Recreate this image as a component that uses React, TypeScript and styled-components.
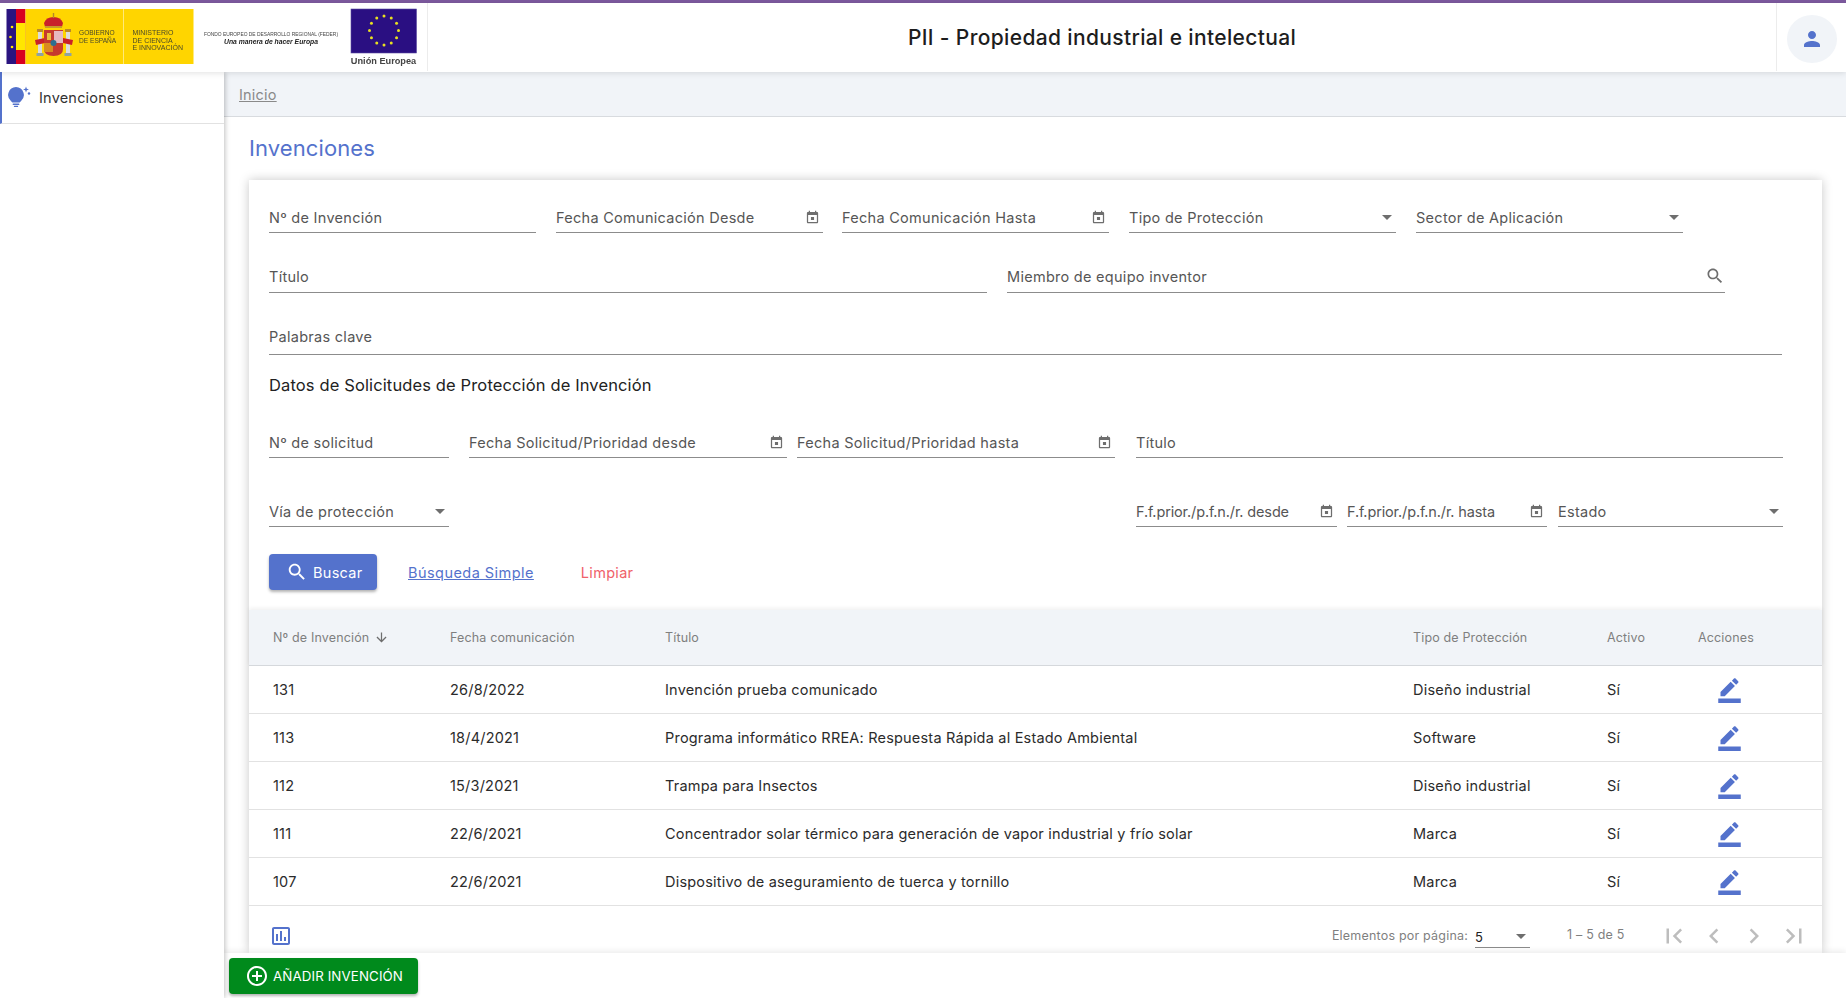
import React from 'react';
import styled, { createGlobalStyle } from 'styled-components';

const primary = '#5472cc';
const fontStack = 'Inter, "Noto Sans", "Liberation Sans", sans-serif';

const GlobalStyle = createGlobalStyle`
  html, body {
    margin: 0;
    height: 100%;
    overflow: hidden;
    background: #fff;
    font-family: ${fontStack};
    color: #2b2b2b;
  }
  * { box-sizing: border-box; }
`;

const Page = styled.div`
  display: flex;
  flex-direction: column;
  height: 998px;
  border-top: 3px solid #7d5a9f;
`;

const Header = styled.header`
  display: flex;
  flex: 0 0 69px;
  align-items: stretch;
  background: #fff;
  position: relative;
  z-index: 3;
  box-shadow: 0 1px 6px rgba(0, 0, 0, 0.12);
`;

const LogoBox = styled.div`
  flex: 0 0 428px;
  border-right: 1px solid #ececec;
  margin-bottom: 1px;
`;

const LogoArt = styled.svg`
  display: block;
  filter: blur(0.35px);
`;

const AppTitle = styled.h1`
  flex: 1;
  margin: 0;
  text-align: center;
  align-self: center;
  font-size: 21px;
  font-weight: 500;
  letter-spacing: 0.35px;
  color: #1d1d1d;
`;

const UserBox = styled.div`
  flex: 0 0 70px;
  display: flex;
  align-items: center;
  justify-content: center;
  border-left: 1px solid #ececec;
  margin-bottom: 1px;
  padding-left: 1px;
`;

const Avatar = styled.div`
  width: 50px;
  height: 48px;
  border-radius: 50%;
  background: #f1f4f8;
  display: flex;
  align-items: center;
  justify-content: center;
  margin-top: 3px;
`;

const Body = styled.div`
  display: flex;
  flex: 1;
  min-height: 0;
`;

const Sidebar = styled.nav`
  flex: 0 0 224px;
  background: #fff;
  position: relative;
  z-index: 2;
  box-shadow: 1px 0 5px rgba(0, 0, 0, 0.25);
`;

const NavItem = styled.div`
  display: flex;
  align-items: center;
  height: 52px;
  border-left: 2px solid ${primary};
  border-bottom: 1px solid #e2e2e2;
  padding-left: 5px;
  gap: 6px;
  font-size: 14.5px;
  letter-spacing: 0.2px;
  color: #333;
`;

const Main = styled.main`
  flex: 1;
  min-width: 0;
  display: flex;
  flex-direction: column;
`;

const Breadcrumb = styled.div`
  flex: 0 0 45px;
  background: #f1f4f8;
  border-bottom: 1px solid #d8dbdf;
  padding: 14px 0 0 15px;
  font-size: 14.5px;
  letter-spacing: 0.2px;
  color: #8a8a8a;
  text-decoration: underline;
`;

const Content = styled.div`
  flex: 1;
  min-height: 0;
  overflow: hidden;
  padding: 16px 24px 0 25px;
`;

const PageTitle = styled.h2`
  margin: 0;
  height: 47px;
  font-size: 22px;
  line-height: 30px;
  font-weight: 400;
  letter-spacing: 0.1px;
  color: ${primary};
`;

const Card = styled.section`
  background: #fff;
  box-shadow: 0 0 10px rgba(0, 0, 0, 0.22);
  height: 773px;
`;

const Form = styled.div`
  padding: 23px 38px 0 20px;
`;

const Row = styled.div<{ $mt?: number }>`
  display: flex;
  margin-top: ${(p) => p.$mt ?? 0}px;
`;

const Field = styled.div<{ $w: number; $ml?: number; $lift?: number; $tight?: boolean }>`
  flex: 0 0 ${(p) => p.$w}px;
  margin-left: ${(p) => p.$ml ?? 0}px;
  height: 30px;
  display: flex;
  align-items: center;
  justify-content: space-between;
  border-bottom: 1px solid #8c8c8c;
  font-size: 14.5px;
  letter-spacing: ${(p) => (p.$tight ? -0.14 : 0.28)}px;
  color: #565656;
  padding-bottom: ${(p) => p.$lift ?? 1}px;
`;

const Caret = styled.span`
  width: 0;
  height: 0;
  border-left: 5px solid transparent;
  border-right: 5px solid transparent;
  border-top: 5px solid #6e6e6e;
  margin-right: 4px;
`;

const FieldIcon = styled.span<{ $mr: number }>`
  display: flex;
  margin-right: ${(p) => p.$mr}px;
`;

const SectionTitle = styled.h3`
  margin: 18px 0 0;
  height: 24px;
  font-size: 16.5px;
  line-height: 24px;
  font-weight: 400;
  letter-spacing: 0.13px;
  color: #222;
`;

const Actions = styled.div`
  display: flex;
  align-items: center;
  margin-top: 27px;
  height: 36px;
`;

const SearchButton = styled.div`
  width: 108px;
  height: 36px;
  border-radius: 4px;
  background: ${primary};
  color: #fff;
  display: flex;
  align-items: center;
  padding-left: 17px;
  gap: 5px;
  font-size: 14.5px;
  letter-spacing: 0.3px;
  box-shadow: 0 2px 3px rgba(0, 0, 0, 0.3);
`;

const SimpleLink = styled.span`
  margin-left: 31px;
  font-size: 14.5px;
  letter-spacing: 0.45px;
  color: ${primary};
  text-decoration: underline;
`;

const ClearLink = styled.span`
  margin-left: 47px;
  font-size: 14.5px;
  letter-spacing: 0.3px;
  color: #f0626a;
`;

const TableWrap = styled.div`
  margin-top: 20px;
`;

const Grid = styled.div<{ $head?: boolean }>`
  display: grid;
  grid-template-columns: 201px 215px 748px 194px 91px 124px;
  align-items: center;
  height: ${(p) => (p.$head ? 56 : 48)}px;
  background: ${(p) => (p.$head ? '#f1f4f8' : '#fff')};
  border-bottom: 1px solid ${(p) => (p.$head ? '#d5d8dc' : '#e2e2e2')};
  font-size: ${(p) => (p.$head ? 12.5 : 14.5)}px;
  letter-spacing: ${(p) => (p.$head ? 0.15 : 0.2)}px;
  color: ${(p) => (p.$head ? '#7f7f7f' : '#2b2b2b')};
  box-shadow: ${(p) => (p.$head ? '0 -2px 4px rgba(0, 0, 0, 0.06)' : 'none')};
  & > :first-child {
    padding-left: 24px;
  }
`;

const SortHead = styled.span`
  display: flex;
  align-items: center;
  gap: 5px;
`;

const EditCell = styled.span`
  display: flex;
  padding-left: 18px;
`;

const TableFooter = styled.div`
  display: flex;
  align-items: center;
  height: 47px;
  padding: 12px 0 0 20px;
  font-size: 12.5px;
  letter-spacing: 0.2px;
  color: #7f7f7f;
`;

const FooterSpacer = styled.div`
  flex: 1;
`;

const PerPage = styled.div`
  display: flex;
  align-items: center;
  justify-content: space-between;
  width: 55px;
  height: 24px;
  margin-left: 7px;
  border-bottom: 1px solid #8c8c8c;
  color: #222;
  font-size: 13px;
  padding-top: 3px;
`;

const RangeLabel = styled.span`
  margin: -3px 0 0 37px;
  width: 92px;
`;

const PageIcons = styled.div`
  display: flex;
  gap: 10px;
  margin-right: 13px;
`;

const BottomBar = styled.div`
  flex: 0 0 45px;
  background: #fff;
  padding: 5px 0 0 5px;
  position: relative;
  box-shadow: 0 -2px 6px rgba(0, 0, 0, 0.08);
`;

const AddButton = styled.div`
  width: 189px;
  height: 36px;
  border-radius: 4px;
  background: #008a1c;
  color: #fff;
  display: flex;
  align-items: center;
  padding-left: 16px;
  gap: 4px;
  font-size: 13.3px;
  letter-spacing: 0.12px;
  box-shadow: 0 2px 3px rgba(0, 0, 0, 0.3);
`;

const Icon = ({ d, size, color }: { d: string; size: number; color: string }) => (
  <svg width={size} height={size} viewBox="0 0 24 24" fill={color}>
    <path d={d} />
  </svg>
);

const paths = {
  today: 'M19 3h-1V1h-2v2H8V1H6v2H5c-1.11 0-1.99.9-1.99 2L3 19c0 1.1.89 2 2 2h14c1.1 0 2-.9 2-2V5c0-1.1-.9-2-2-2zm0 16H5V8h14v11zM9.5 11h5v5h-5z',
  search: 'M15.5 14h-.79l-.28-.27C15.41 12.59 16 11.11 16 9.5 16 5.91 13.09 3 9.5 3S3 5.91 3 9.5 5.91 16 9.5 16c1.61 0 3.09-.59 4.23-1.57l.27.28v.79l5 4.99L20.49 19l-4.99-5zm-6 0C7.01 14 5 11.99 5 9.5S7.01 5 9.5 5 14 7.01 14 9.5 11.99 14 9.5 14z',
  person: 'M12 12c2.21 0 4-1.79 4-4s-1.79-4-4-4-4 1.79-4 4 1.79 4 4 4zm0 2c-2.67 0-8 1.34-8 4v2h16v-2c0-2.66-5.33-4-8-4z',
  edit: 'M22 24H2v-4h20v4zM13.06 5.19l3.75 3.75L7.75 18H4v-3.75l9.06-9.06zm4.82 2.68-3.75-3.75 1.83-1.83c.39-.39 1.02-.39 1.41 0l2.34 2.34c.39.39.39 1.02 0 1.41l-1.83 1.83z',
  poll: 'M19 3H5c-1.1 0-2 .9-2 2v14c0 1.1.9 2 2 2h14c1.1 0 2-.9 2-2V5c0-1.1-.9-2-2-2zm0 16H5V5h14v14zM7 10h2v7H7zm4-3h2v10h-2zm4 6h2v4h-2z',
  add: 'M13 7h-2v4H7v2h4v4h2v-4h4v-2h-4V7zm-1-5C6.48 2 2 6.48 2 12s4.48 10 10 10 10-4.48 10-10S17.52 2 12 2zm0 18c-4.41 0-8-3.59-8-8s3.59-8 8-8 8 3.59 8 8-3.59 8-8 8z',
  down: 'M20 12l-1.41-1.41L13 16.17V4h-2v12.17l-5.58-5.59L4 12l8 8 8-8z',
  first: 'M18.41 16.59L13.82 12l4.59-4.59L17 6l-6 6 6 6zM6 6h2v12H6z',
  prev: 'M15.41 7.41L14 6l-6 6 6 6 1.41-1.41L10.83 12z',
  next: 'M10 6L8.59 7.41 13.17 12l-4.58 4.59L10 18l6-6z',
  last: 'M5.59 7.41L10.18 12l-4.59 4.59L7 18l6-6-6-6zM16 6h2v12h-2z',
};

const euStars = Array.from({ length: 12 }, (_, i) => {
  const a = (i * Math.PI) / 6;
  return { x: 384 + 14.5 * Math.sin(a), y: 27.5 - 14.5 * Math.cos(a) };
});

const Logos = () => (
  <LogoArt width="427" height="68" viewBox="0 0 427 68">
    <rect x="6.5" y="6" width="9.5" height="55" fill="#2a1480" />
    <rect x="16" y="6" width="9.5" height="55" fill="#d8001f" />
    <rect x="16" y="20" width="9.5" height="27" fill="#ffe600" />
    <rect x="25.5" y="6" width="168" height="55" fill="#ffd500" />
    <rect x="123" y="6" width="1" height="55" fill="#ffe97a" />
    <circle cx="12" cy="24" r="1.3" fill="#ffe600" />
    <circle cx="10.5" cy="34" r="1.3" fill="#ffe600" />
    <circle cx="12" cy="44" r="1.3" fill="#ffe600" />
    {/* escudo */}
    <path d="M44 20 Q46 14 53.5 14 Q61 14 63 20 L62 24 H45 Z" fill="#c9202a" />
    <rect x="45" y="23" width="17" height="2" fill="#c79a2a" />
    <rect x="52.8" y="10" width="1.4" height="5" fill="#b5862a" />
    <rect x="37" y="26" width="6" height="3" fill="#b98a2a" />
    <rect x="65" y="26" width="6" height="3" fill="#b98a2a" />
    <rect x="38" y="29" width="4" height="21" fill="#dcdcdc" />
    <rect x="66" y="29" width="4" height="21" fill="#dcdcdc" />
    <rect x="36.5" y="50" width="7" height="3" fill="#8fa3a0" />
    <rect x="64.5" y="50" width="7" height="3" fill="#8fa3a0" />
    <path d="M35 37 L45 35 V40 L36 42 Z M73 37 L63 35 V40 L72 42 Z" fill="#c9202a" />
    <path d="M44 27 H63 V46 Q63 53 53.5 53 Q44 53 44 46 Z" fill="#c63a2e" />
    <rect x="54" y="28" width="9" height="12" fill="#e6b8c0" />
    <rect x="44" y="40" width="9" height="9" fill="#d98a20" />
    <rect x="47" y="30" width="4" height="7" fill="#e8c040" />
    <circle cx="53.5" cy="40" r="3" fill="#2e6f8f" />
    <g fill="#4a4a2a" fontFamily="Liberation Sans, sans-serif" fontSize="6.6">
      <text x="79" y="32">GOBIERNO</text>
      <text x="79" y="39.5">DE ESPAÑA</text>
    </g>
    <g fill="#4a4a2a" fontFamily="Liberation Sans, sans-serif" fontSize="7">
      <text x="132.5" y="32">MINISTERIO</text>
      <text x="132.5" y="39.5">DE CIENCIA</text>
      <text x="132.5" y="47">E INNOVACIÓN</text>
    </g>
    <text x="271" y="33" textAnchor="middle" fill="#444" fontFamily="Liberation Sans, sans-serif" fontSize="4.9">
      FONDO EUROPEO DE DESARROLLO REGIONAL (FEDER)
    </text>
    <text x="271" y="41" textAnchor="middle" fill="#222" fontFamily="Liberation Sans, sans-serif" fontSize="6.8" fontStyle="italic" fontWeight="700">
      Una manera de hacer Europa
    </text>
    <rect x="351" y="6" width="65.5" height="44" fill="#2a0f82" stroke="#5a4aa0" strokeWidth="0.6" />
    {euStars.map((s) => (
      <circle key={s.x + '-' + s.y} cx={s.x} cy={s.y} r="1.5" fill="#e8e020" />
    ))}
    <text x="383.5" y="61" textAnchor="middle" fill="#444" fontFamily="Liberation Sans, sans-serif" fontSize="9.2" fontWeight="700">
      Unión Europea
    </text>
  </LogoArt>
);

const Bulb = () => (
  <svg width="26" height="26" viewBox="0 0 26 26" fill={primary}>
    <g transform="translate(-0.5 -3.5)">
      <path d="M9.5 5.5a8 8 0 0 1 4.9 14.2c-.7.6-1.1 1-1.2 1.3H5.800c-.1-.3-.5-.7-1.200-1.300A8 8 0 0 1 9.500 5.500z" />
      <rect x="6.200" y="22" width="6.600" height="1.400" rx="0.500" />
      <rect x="7.400" y="24.200" width="4.200" height="1.200" rx="0.500" />
    </g>
    <path d="M19 1.500l.8 2.200 2.200.8-2.200.8-.8 2.200-.8-2.200-2.200-.8 2.200-.8z" />
    <circle cx="22" cy="8.500" r="1.200" />
  </svg>
);

const DateField = ({ label, w, ml, tight }: { label: string; w: number; ml?: number; tight?: boolean }) => (
  <Field $w={w} $ml={ml} $tight={tight}>
    {label}
    <FieldIcon $mr={3}>
      <Icon d={paths.today} size={15} color="#6e6e6e" />
    </FieldIcon>
  </Field>
);

const SelectField = ({ label, w, ml }: { label: string; w: number; ml?: number }) => (
  <Field $w={w} $ml={ml}>
    {label}
    <Caret />
  </Field>
);

const rows = [
  ['131', '26/8/2022', 'Invención prueba comunicado', 'Diseño industrial'],
  ['113', '18/4/2021', 'Programa informático RREA: Respuesta Rápida al Estado Ambiental', 'Software'],
  ['112', '15/3/2021', 'Trampa para Insectos', 'Diseño industrial'],
  ['111', '22/6/2021', 'Concentrador solar térmico para generación de vapor industrial y frío solar', 'Marca'],
  ['107', '22/6/2021', 'Dispositivo de aseguramiento de tuerca y tornillo', 'Marca'],
];

export default function App() {
  return (
    <>
      <GlobalStyle />
      <Page>
        <Header>
          <LogoBox>
            <Logos />
          </LogoBox>
          <AppTitle>PII - Propiedad industrial e intelectual</AppTitle>
          <UserBox>
            <Avatar>
              <Icon d={paths.person} size={24} color={primary} />
            </Avatar>
          </UserBox>
        </Header>
        <Body>
          <Sidebar>
            <NavItem>
              <Bulb />
              Invenciones
            </NavItem>
          </Sidebar>
          <Main>
            <Breadcrumb>Inicio</Breadcrumb>
            <Content>
              <PageTitle>Invenciones</PageTitle>
              <Card>
                <Form>
                  <Row>
                    <Field $w={267}>Nº de Invención</Field>
                    <DateField label="Fecha Comunicación Desde" w={267} ml={20} />
                    <DateField label="Fecha Comunicación Hasta" w={267} ml={19} />
                    <SelectField label="Tipo de Protección" w={267} ml={20} />
                    <SelectField label="Sector de Aplicación" w={267} ml={20} />
                  </Row>
                  <Row $mt={30}>
                    <Field $w={718} $lift={3}>Título</Field>
                    <Field $w={718} $ml={20} $lift={3}>
                      Miembro de equipo inventor
                      <FieldIcon $mr={0}>
                        <Icon d={paths.search} size={20} color="#6e6e6e" />
                      </FieldIcon>
                    </Field>
                  </Row>
                  <Row $mt={32}>
                    <Field $w={1513} $lift={6}>Palabras clave</Field>
                  </Row>
                  <SectionTitle>Datos de Solicitudes de Protección de Invención</SectionTitle>
                  <Row $mt={31}>
                    <Field $w={180}>Nº de solicitud</Field>
                    <DateField label="Fecha Solicitud/Prioridad desde" w={318} ml={20} />
                    <DateField label="Fecha Solicitud/Prioridad hasta" w={318} ml={10} />
                    <Field $w={647} $ml={21}>Título</Field>
                  </Row>
                  <Row $mt={39}>
                    <SelectField label="Vía de protección" w={180} />
                    <DateField label="F.f.prior./p.f.n./r. desde" w={201} ml={687} tight />
                    <DateField label="F.f.prior./p.f.n./r. hasta" w={200} ml={10} tight />
                    <SelectField label="Estado" w={225} ml={11} />
                  </Row>
                  <Actions>
                    <SearchButton>
                      <Icon d={paths.search} size={22} color="#fff" />
                      Buscar
                    </SearchButton>
                    <SimpleLink>Búsqueda Simple</SimpleLink>
                    <ClearLink>Limpiar</ClearLink>
                  </Actions>
                </Form>
                <TableWrap>
                  <Grid $head>
                    <SortHead>
                      Nº de Invención
                      <Icon d={paths.down} size={15} color="#6e6e6e" />
                    </SortHead>
                    <span>Fecha comunicación</span>
                    <span>Título</span>
                    <span>Tipo de Protección</span>
                    <span>Activo</span>
                    <span>Acciones</span>
                  </Grid>
                  {rows.map((r) => (
                    <Grid key={r[0]}>
                      <span>{r[0]}</span>
                      <span>{r[1]}</span>
                      <span>{r[2]}</span>
                      <span>{r[3]}</span>
                      <span>Sí</span>
                      <EditCell>
                        <Icon d={paths.edit} size={27} color={primary} />
                      </EditCell>
                    </Grid>
                  ))}
                  <TableFooter>
                    <Icon d={paths.poll} size={24} color={primary} />
                    <FooterSpacer />
                    <span>Elementos por página:</span>
                    <PerPage>
                      5
                      <Caret />
                    </PerPage>
                    <RangeLabel>1 – 5 de 5</RangeLabel>
                    <PageIcons>
                      <Icon d={paths.first} size={30} color="#bdbdbd" />
                      <Icon d={paths.prev} size={30} color="#bdbdbd" />
                      <Icon d={paths.next} size={30} color="#bdbdbd" />
                      <Icon d={paths.last} size={30} color="#bdbdbd" />
                    </PageIcons>
                  </TableFooter>
                </TableWrap>
              </Card>
            </Content>
            <BottomBar>
              <AddButton>
                <Icon d={paths.add} size={24} color="#fff" />
                AÑADIR INVENCIÓN
              </AddButton>
            </BottomBar>
          </Main>
        </Body>
      </Page>
    </>
  );
}
